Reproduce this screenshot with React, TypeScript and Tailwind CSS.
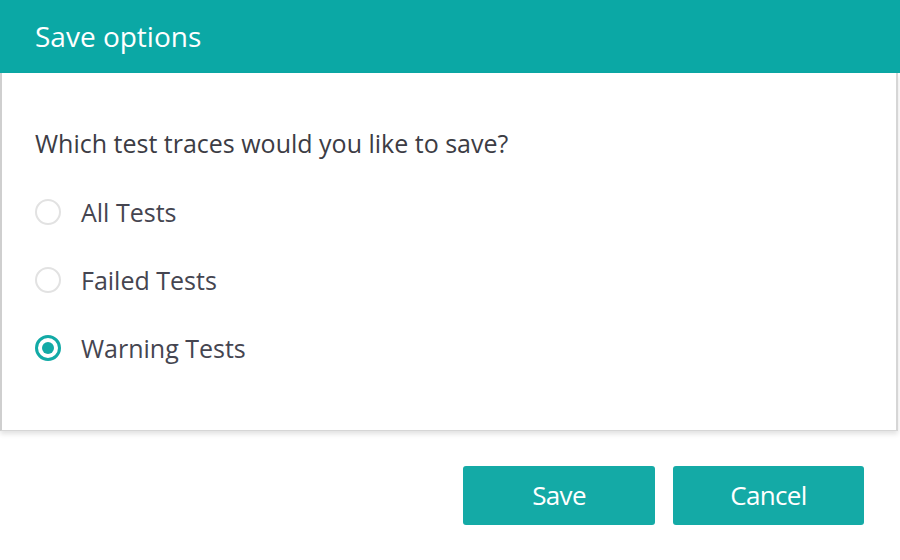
import { useState } from "react";

const options = ["All Tests", "Failed Tests", "Warning Tests"];

const RadioRow = ({
  label,
  checked,
  onSelect,
}: {
  label: string;
  checked: boolean;
  onSelect: () => void;
}) => (
  <label
    onClick={onSelect}
    className="flex items-center h-[68px] cursor-pointer"
  >
    {checked ? (
      <span className="flex items-center justify-center w-[26px] h-[26px] rounded-full border-[3px] border-[#12aaa6]">
        <span className="w-[12px] h-[12px] rounded-full bg-[#12aaa6]" />
      </span>
    ) : (
      <span className="w-[26px] h-[26px] rounded-full border-2 border-[#e2e2e2]" />
    )}
    <span className="ml-[20px] text-[25px] leading-[30px] text-[#454550]">
      {label}
    </span>
  </label>
);

export default function App() {
  const [selected, setSelected] = useState(2);

  return (
    <div className="w-[900px] h-[560px] bg-white font-['Open_Sans',sans-serif]">
      {/* header bar */}
      <div className="h-[73px] flex items-center px-[35px] bg-[#0ba8a5]">
        <h1 className="text-[28px] leading-[34px] text-white -mt-[1px]">
          Save options
        </h1>
      </div>

      {/* body */}
      <div className="w-[898px] border-x-2 border-b border-[#d6d6d6] border-l-[#cfcfcf] bg-white pt-[55px] pb-[48px] px-[33px] shadow-[0_3px_5px_rgba(0,0,0,0.12)]">
        <p className="text-[25px] leading-[30px] text-[#3c3c44]">
          Which test traces would you like to save?
        </p>
        <div className="mt-[20px] flex flex-col">
          {options.map((opt, i) => (
            <RadioRow
              key={opt}
              label={opt}
              checked={selected === i}
              onSelect={() => setSelected(i)}
            />
          ))}
        </div>
      </div>

      {/* actions */}
      <div className="flex justify-end gap-[18px] pr-[36px] mt-[35px]">
        <button className="w-[192px] h-[59px] rounded-[3px] bg-[#14aaa6] text-white text-[26px] tracking-tight">
          Save
        </button>
        <button className="w-[191px] h-[59px] rounded-[3px] bg-[#14aaa6] text-white text-[26px] tracking-tight">
          Cancel
        </button>
      </div>
    </div>
  );
}
